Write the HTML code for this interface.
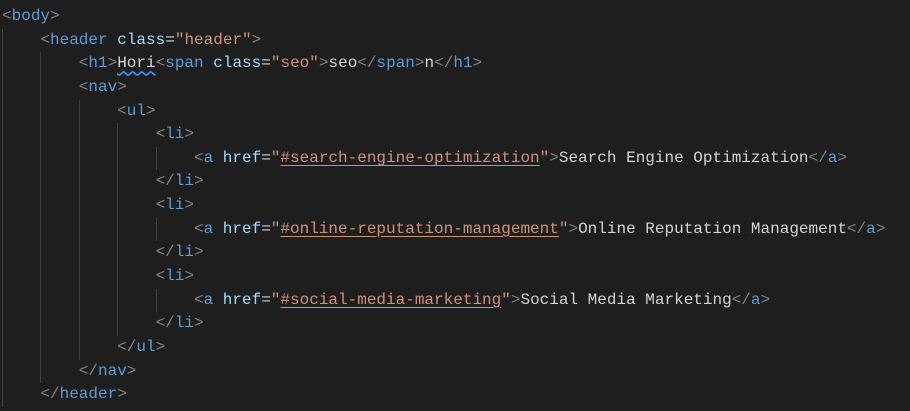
<!DOCTYPE html>
<html><head><meta charset="utf-8"><style>
html,body{margin:0;padding:0;background:#1e1e1e;width:910px;height:411px;overflow:hidden}
.c{position:absolute;left:2px;top:5px;font-family:"Liberation Mono",monospace;font-size:16px;line-height:23.65px;color:#d4d4d4}
.l{height:23.65px;white-space:pre}
.i{display:inline-block;width:38.4px;height:23.65px;vertical-align:top;box-shadow:inset 1px 0 #404040}
.b{color:#808080}.t{color:#569cd6}.a{color:#9cdcfe}.s{color:#ce9178}
.u{text-decoration:underline;text-decoration-color:#ce9178;text-underline-offset:3px}
.w{text-decoration:underline wavy #3794ff;text-underline-offset:3px}
</style></head><body><div class="c"><div class="l"><span class="b">&lt;</span><span class="t">body</span><span class="b">&gt;</span></div><div class="l"><span class="i"></span><span class="b">&lt;</span><span class="t">header</span> <span class="a">class</span>=<span class="s">"header"</span><span class="b">&gt;</span></div><div class="l"><span class="i"></span><span class="i"></span><span class="b">&lt;</span><span class="t">h1</span><span class="b">&gt;</span><span class="w">Hori</span><span class="b">&lt;</span><span class="t">span</span> <span class="a">class</span>=<span class="s">"seo"</span><span class="b">&gt;</span>seo<span class="b">&lt;/</span><span class="t">span</span><span class="b">&gt;</span>n<span class="b">&lt;/</span><span class="t">h1</span><span class="b">&gt;</span></div><div class="l"><span class="i"></span><span class="i"></span><span class="b">&lt;</span><span class="t">nav</span><span class="b">&gt;</span></div><div class="l"><span class="i"></span><span class="i"></span><span class="i"></span><span class="b">&lt;</span><span class="t">ul</span><span class="b">&gt;</span></div><div class="l"><span class="i"></span><span class="i"></span><span class="i"></span><span class="i"></span><span class="b">&lt;</span><span class="t">li</span><span class="b">&gt;</span></div><div class="l"><span class="i"></span><span class="i"></span><span class="i"></span><span class="i"></span><span class="i"></span><span class="b">&lt;</span><span class="t">a</span> <span class="a">href</span>=<span class="s">"<span class="u">#search-engine-optimization</span>"</span><span class="b">&gt;</span>Search Engine Optimization<span class="b">&lt;/</span><span class="t">a</span><span class="b">&gt;</span></div><div class="l"><span class="i"></span><span class="i"></span><span class="i"></span><span class="i"></span><span class="b">&lt;/</span><span class="t">li</span><span class="b">&gt;</span></div><div class="l"><span class="i"></span><span class="i"></span><span class="i"></span><span class="i"></span><span class="b">&lt;</span><span class="t">li</span><span class="b">&gt;</span></div><div class="l"><span class="i"></span><span class="i"></span><span class="i"></span><span class="i"></span><span class="i"></span><span class="b">&lt;</span><span class="t">a</span> <span class="a">href</span>=<span class="s">"<span class="u">#online-reputation-management</span>"</span><span class="b">&gt;</span>Online Reputation Management<span class="b">&lt;/</span><span class="t">a</span><span class="b">&gt;</span></div><div class="l"><span class="i"></span><span class="i"></span><span class="i"></span><span class="i"></span><span class="b">&lt;/</span><span class="t">li</span><span class="b">&gt;</span></div><div class="l"><span class="i"></span><span class="i"></span><span class="i"></span><span class="i"></span><span class="b">&lt;</span><span class="t">li</span><span class="b">&gt;</span></div><div class="l"><span class="i"></span><span class="i"></span><span class="i"></span><span class="i"></span><span class="i"></span><span class="b">&lt;</span><span class="t">a</span> <span class="a">href</span>=<span class="s">"<span class="u">#social-media-marketing</span>"</span><span class="b">&gt;</span>Social Media Marketing<span class="b">&lt;/</span><span class="t">a</span><span class="b">&gt;</span></div><div class="l"><span class="i"></span><span class="i"></span><span class="i"></span><span class="i"></span><span class="b">&lt;/</span><span class="t">li</span><span class="b">&gt;</span></div><div class="l"><span class="i"></span><span class="i"></span><span class="i"></span><span class="b">&lt;/</span><span class="t">ul</span><span class="b">&gt;</span></div><div class="l"><span class="i"></span><span class="i"></span><span class="b">&lt;/</span><span class="t">nav</span><span class="b">&gt;</span></div><div class="l"><span class="i"></span><span class="b">&lt;/</span><span class="t">header</span><span class="b">&gt;</span></div></div></body></html>
